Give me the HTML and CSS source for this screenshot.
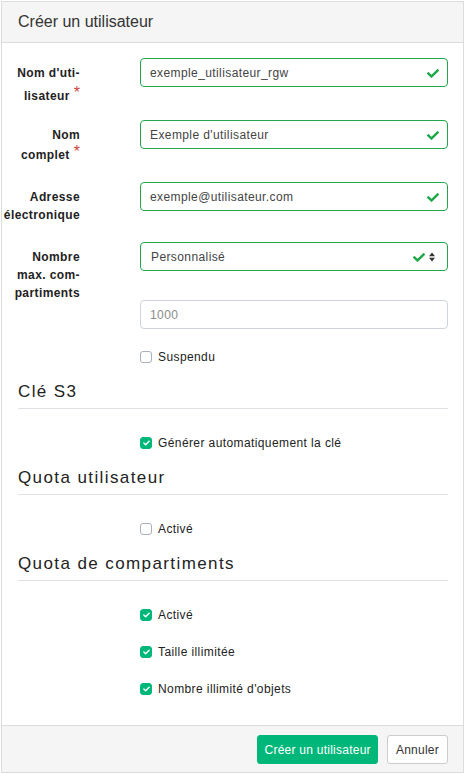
FILE: index.html
```html
<!DOCTYPE html>
<html lang="fr">
<head>
<meta charset="utf-8">
<title>Créer un utilisateur</title>
<link rel="stylesheet" href="styles.css">
</head>
<body>
<div class="modal">
  <div class="modal-header">
    <h1 class="title">Créer un utilisateur</h1>
  </div>
  <div class="modal-body">
    <div class="field field-hyph">
      <label class="lbl" for="uid"><span>Nom d'uti-</span><span class="req-line hyph">lisateur<span class="req">*</span></span></label>
      <div class="ctl">
        <div class="wrap">
          <input id="uid" class="form-control valid" type="text" value="exemple_utilisateur_rgw">
          <svg class="ok" viewBox="0 64 512 384" aria-hidden="true"><path d="M173.898 439.404l-166.4-166.4c-9.997-9.997-9.997-26.206 0-36.204l36.203-36.204c9.997-9.998 26.207-9.998 36.204 0L192 312.69 432.095 72.596c9.997-9.997 26.207-9.997 36.204 0l36.203 36.204c9.997 9.997 9.997 26.206 0 36.204l-294.4 294.401c-9.998 9.997-26.207 9.997-36.204-.001z"/></svg>
        </div>
      </div>
    </div>

    <div class="field">
      <label class="lbl" for="name"><span>Nom</span><span class="req-line">complet<span class="req">*</span></span></label>
      <div class="ctl">
        <div class="wrap">
          <input id="name" class="form-control valid" type="text" value="Exemple d'utilisateur">
          <svg class="ok" viewBox="0 64 512 384" aria-hidden="true"><path d="M173.898 439.404l-166.4-166.4c-9.997-9.997-9.997-26.206 0-36.204l36.203-36.204c9.997-9.998 26.207-9.998 36.204 0L192 312.69 432.095 72.596c9.997-9.997 26.207-9.997 36.204 0l36.203 36.204c9.997 9.997 9.997 26.206 0 36.204l-294.4 294.401c-9.998 9.997-26.207 9.997-36.204-.001z"/></svg>
        </div>
      </div>
    </div>

    <div class="field">
      <label class="lbl" for="mail"><span>Adresse</span><span>électronique</span></label>
      <div class="ctl">
        <div class="wrap">
          <input id="mail" class="form-control valid" type="text" value="exemple@utilisateur.com">
          <svg class="ok" viewBox="0 64 512 384" aria-hidden="true"><path d="M173.898 439.404l-166.4-166.4c-9.997-9.997-9.997-26.206 0-36.204l36.203-36.204c9.997-9.998 26.207-9.998 36.204 0L192 312.69 432.095 72.596c9.997-9.997 26.207-9.997 36.204 0l36.203 36.204c9.997 9.997 9.997 26.206 0 36.204l-294.4 294.401c-9.998 9.997-26.207 9.997-36.204-.001z"/></svg>
        </div>
      </div>
    </div>

    <div class="field">
      <label class="lbl" for="maxb"><span>Nombre</span><span>max. com-</span><span>partiments</span></label>
      <div class="ctl stack">
        <div class="wrap">
          <select id="maxb" class="form-control valid select">
            <option>Personnalisé</option>
          </select>
          <svg class="ok ok-select" viewBox="0 64 512 384" aria-hidden="true"><path d="M173.898 439.404l-166.4-166.4c-9.997-9.997-9.997-26.206 0-36.204l36.203-36.204c9.997-9.998 26.207-9.998 36.204 0L192 312.69 432.095 72.596c9.997-9.997 26.207-9.997 36.204 0l36.203 36.204c9.997 9.997 9.997 26.206 0 36.204l-294.4 294.401c-9.998 9.997-26.207 9.997-36.204-.001z"/></svg>
          <svg class="sort" viewBox="0 0 6 10" aria-hidden="true"><path d="M0 4.2 3 .6 6 4.2Z M0 5.8 3 9.4 6 5.8Z"/></svg>
        </div>
        <input class="form-control" type="text" placeholder="1000">
      </div>
    </div>

    <label class="check"><span class="box"></span><span>Suspendu</span></label>

    <h2 class="sec-title">Clé S3</h2>
    <label class="check first"><span class="box on"><svg viewBox="0 0 8 6"><path d="M1 3.1 3 5 7 1"/></svg></span><span>Générer automatiquement la clé</span></label>

    <h2 class="sec-title">Quota utilisateur</h2>
    <label class="check first"><span class="box"></span><span>Activé</span></label>

    <h2 class="sec-title">Quota de compartiments</h2>
    <label class="check first"><span class="box on"><svg viewBox="0 0 8 6"><path d="M1 3.1 3 5 7 1"/></svg></span><span>Activé</span></label>
    <label class="check next"><span class="box on"><svg viewBox="0 0 8 6"><path d="M1 3.1 3 5 7 1"/></svg></span><span>Taille illimitée</span></label>
    <label class="check next"><span class="box on"><svg viewBox="0 0 8 6"><path d="M1 3.1 3 5 7 1"/></svg></span><span>Nombre illimité d'objets</span></label>
  </div>
  <div class="modal-footer">
    <button class="btn btn-primary" type="button">Créer un utilisateur</button>
    <button class="btn btn-default" type="button">Annuler</button>
  </div>
</div>
</body>
</html>
```

FILE: styles.css
```css
* {
  box-sizing: border-box;
}

body {
  margin: 1px 0 0 1px;
  background: #fff;
  color: #333;
  font-family: "Liberation Sans", Arial, sans-serif;
}

.modal {
  width: 463px;
  border: 1px solid #dcdcdc;
  background: #fff;
}

.modal-header {
  height: 41px;
  display: flex;
  align-items: center;
  padding: 0 16px;
  background: #f5f5f5;
  border-bottom: 1px solid #dcdcdc;
}

.title {
  margin: 0;
  font-size: 16px;
  font-weight: 400;
  line-height: 18px;
  color: #333;
}

.modal-body {
  display: flex;
  flex-direction: column;
  padding: 15px 15px 26px 16px;
}

.field {
  display: grid;
  grid-template-columns: 62px 1fr;
  column-gap: 60px;
  margin-bottom: 18px;
}

.field-hyph {
  margin-bottom: 15px;
}

.lbl {
  display: flex;
  flex-direction: column;
  align-items: flex-end;
  padding-top: 6px;
  font-size: 12px;
  font-weight: 700;
  line-height: 18px;
  letter-spacing: 0.4px;
  white-space: nowrap;
  text-align: right;
  color: #222;
}

.req-line {
  padding-top: 2px;
}

.req-line.hyph {
  padding-top: 5px;
}

.req {
  margin-left: 4px;
  color: #c9483f;
  font-size: 16px;
  font-weight: 400;
  line-height: 0;
  letter-spacing: 0;
  vertical-align: 2px;
}

.ctl {
  display: flex;
  flex-direction: column;
}

.stack {
  gap: 29px;
}

.wrap {
  position: relative;
}

.form-control {
  display: block;
  width: 100%;
  height: 29px;
  margin: 0;
  padding: 0 30px 0 9px;
  border: 1px solid #ced4da;
  border-radius: 4px;
  background: #fff;
  color: #444;
  font-family: "Liberation Sans", Arial, sans-serif;
  font-size: 12px;
  letter-spacing: 0.4px;
  outline: none;
}

.form-control::placeholder {
  color: #8a8a8a;
}

.valid {
  border-color: #22a84b;
}

.select {
  appearance: none;
  -webkit-appearance: none;
  padding-left: 10px;
}

.ok {
  position: absolute;
  top: 11px;
  right: 9px;
  width: 12px;
  height: 9px;
  fill: #1fa84a;
}

.ok-select {
  right: 23px;
}

.sort {
  position: absolute;
  top: 10px;
  right: 13px;
  width: 6px;
  height: 10px;
  fill: #333;
}

.check {
  display: flex;
  align-items: center;
  gap: 6px;
  height: 20px;
  padding-left: 122px;
  font-size: 12px;
  letter-spacing: 0.4px;
  color: #222;
}

.check.first {
  margin-top: 24px;
}

.check.next {
  margin-top: 17px;
}

.box {
  flex: none;
  width: 12px;
  height: 12px;
  display: flex;
  align-items: center;
  justify-content: center;
  border: 1px solid #aab1b8;
  border-radius: 3px;
  background: #fff;
}

.box.on {
  background: #00b77a;
  border-color: #00b77a;
}

.box svg {
  width: 7px;
  height: 6px;
  fill: none;
  stroke: #fff;
  stroke-width: 1.6;
  stroke-linecap: round;
  stroke-linejoin: round;
}

.sec-title {
  margin: 15px 0 0;
  padding-bottom: 6px;
  border-bottom: 1px solid #dee2e6;
  font-size: 17px;
  font-weight: 400;
  line-height: 20px;
  letter-spacing: 1.4px;
  color: #222;
}

.modal-footer {
  height: 47px;
  display: flex;
  justify-content: flex-end;
  align-items: flex-start;
  gap: 9px;
  padding: 9px 15px 0 0;
  background: #f5f5f5;
  border-top: 1px solid #dcdcdc;
}

.btn {
  height: 29px;
  margin: 0;
  border-radius: 3px;
  font-family: "Liberation Sans", Arial, sans-serif;
  font-size: 12px;
  letter-spacing: 0.25px;
  cursor: pointer;
}

.btn-primary {
  padding: 0 6px;
  border: 1px solid #00b77a;
  background: #00b77a;
  color: #fff;
}

.btn-default {
  padding: 0 8px;
  border: 1px solid #ccc;
  background: #fff;
  color: #333;
}
```
